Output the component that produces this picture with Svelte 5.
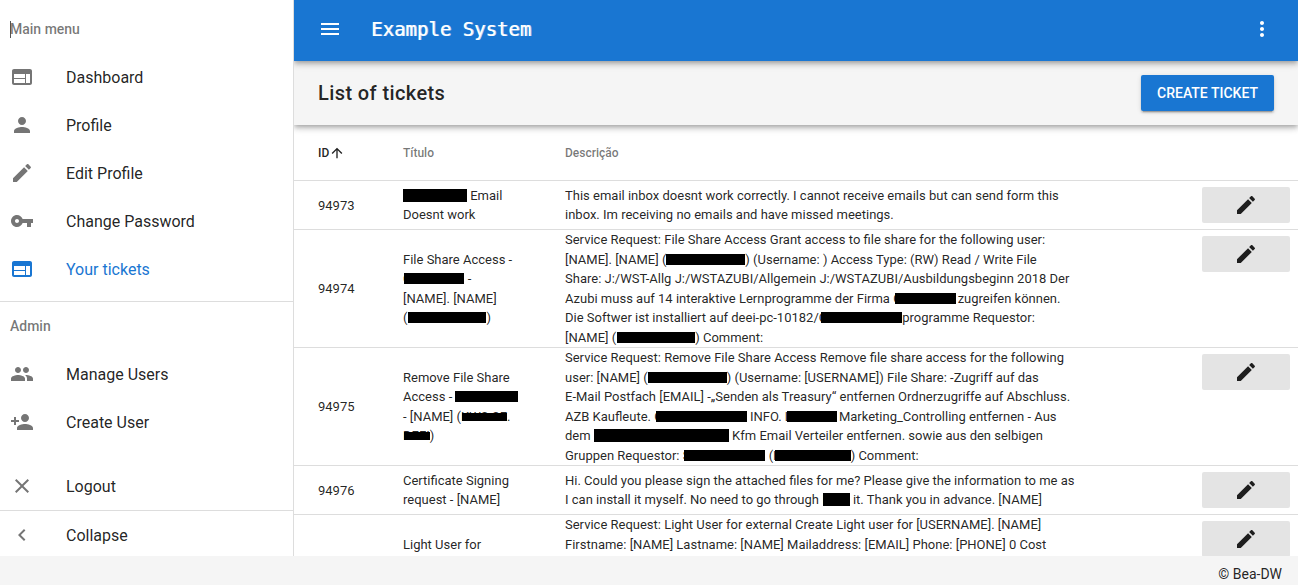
<script>
  const icons = {
    web: 'M20 4H4c-1.100 0-1.990.9-1.990 2L2 18c0 1.100.9 2 2 2h16c1.100 0 2-.9 2-2V6c0-1.100-.9-2-2-2zm-5 14H4v-4h11v4zm0-5H4V9h11v4zm5 5h-4V9h4v9z',
    person: 'M12 12c2.210 0 4-1.790 4-4s-1.790-4-4-4-4 1.790-4 4 1.790 4 4 4zm0 2c-2.670 0-8 1.340-8 4v2h16v-2c0-2.660-5.330-4-8-4z',
    edit: 'M3 17.250V21h3.750L17.810 9.940l-3.750-3.750L3 17.250zM20.710 7.040c.39-.39.39-1.020 0-1.410l-2.340-2.340c-.39-.39-1.020-.39-1.410 0l-1.830 1.830 3.750 3.750 1.830-1.830z',
    key: 'M12.650 10C11.830 7.670 9.610 6 7 6c-3.310 0-6 2.690-6 6s2.690 6 6 6c2.610 0 4.830-1.670 5.650-4H17v4h4v-4h2v-4H12.650zM7 14c-1.100 0-2-.9-2-2s.9-2 2-2 2 .9 2 2-.9 2-2 2z',
    people: 'M16 11c1.660 0 2.990-1.340 2.990-3S17.660 5 16 5c-1.660 0-3 1.340-3 3s1.340 3 3 3zm-8 0c1.660 0 2.990-1.340 2.990-3S9.660 5 8 5C6.340 5 5 6.340 5 8s1.340 3 3 3zm0 2c-2.330 0-7 1.170-7 3.500V19h14v-2.500c0-2.330-4.670-3.500-7-3.500zm8 0c-.29 0-.62.02-.97.05 1.160.84 1.970 1.970 1.970 3.450V19h6v-2.500c0-2.330-4.670-3.500-7-3.500z',
    personAdd: 'M15 12c2.210 0 4-1.790 4-4s-1.790-4-4-4-4 1.790-4 4 1.790 4 4 4zm-9-2V7H4v3H1v2h3v3h2v-3h3v-2H6zm9 4c-2.670 0-8 1.340-8 4v2h16v-2c0-2.660-5.330-4-8-4z',
    close: 'M19 6.410L17.590 5 12 10.590 6.410 5 5 6.410 10.590 12 5 17.590 6.410 19 12 13.410 17.590 19 19 17.590 13.410 12z',
    left: 'M15.410 7.410L14 6l-6 6 6 6 1.410-1.410L10.830 12z',
    menu: 'M3 18h18v-2H3v2zm0-5h18v-2H3v2zm0-7v2h18V6H3z',
    more: 'M12 8c1.100 0 2-.9 2-2s-.9-2-2-2-2 .9-2 2 .9 2 2 2zm0 2c-1.100 0-2 .9-2 2s.9 2 2 2 2-.9 2-2-.9-2-2-2zm0 6c-1.100 0-2 .9-2 2s.9 2 2 2 2-.9 2-2-.9-2-2-2z',
    up: 'M4 12l1.410 1.410L11 7.830V20h2V7.830l5.580 5.590L20 12l-8-8-8 8z'
  };

  const mainMenu = [
    { icon: 'web', label: 'Dashboard' },
    { icon: 'person', label: 'Profile' },
    { icon: 'edit', label: 'Edit Profile' },
    { icon: 'key', label: 'Change Password' },
    { icon: 'web', label: 'Your tickets', active: true }
  ];
  const adminMenu = [
    { icon: 'people', label: 'Manage Users' },
    { icon: 'personAdd', label: 'Create User' }
  ];

  // A redaction bar: width, how far it reaches back over the text, space after it, size variant
  const bar = (w, back = 0, after = 0, size = 'mid') => ({ w, back, after, size });

  const tickets = [
    {
      id: '94973',
      title: [bar(64, 0, 0, 'tall'), ' Email\nDoesnt work'],
      text: ['This email inbox doesnt work correctly. I cannot receive emails but can send form this\ninbox. Im receiving no emails and have missed meetings.']
    },
    {
      id: '94974',
      title: ['File Share Access -\nC', bar(60, 7), ' -\n[NAME]. [NAME]\n(', bar(78, -1), ')'],
      text: [
        'Service Request: File Share Access Grant access to file share for the following user:\n[NAME]. [NAME] (', bar(79),
        ') (Username: ) Access Type: (RW) Read / Write File\nShare: J:/WST-Allg J:/WSTAZUBI/Allgemein J:/WSTAZUBI/Ausbildungsbeginn 2018 Der\nAzubi muss auf 14 interaktive Lernprogramme der Firma C',
        bar(61, 7, 2), 'zugreifen können.\nDie Softwer ist installiert auf deei-pc-10182/C', bar(81, 6),
        'programme Requestor:\n[NAME] (', bar(78, -1), ') Comment:'
      ]
    },
    {
      id: '94975',
      title: ['Remove File Share\nAccess - ', bar(63), '\n- [NAME] (KWS-SE', bar(45, 45, 0, 'thin'), '.\nDEEI', bar(26, 26, 0, 'thin'), ')'],
      text: [
        'Service Request: Remove File Share Access Remove file share access for the following\nuser: [NAME] (', bar(79),
        ') (Username: [USERNAME]) File Share: -Zugriff auf das\nE-Mail Postfach [EMAIL] -„Senden als Treasury“ entfernen Ordnerzugriffe auf Abschluss.\nAZB Kaufleute. C',
        bar(91, 7), ' INFO. L', bar(50, 5, 2), 'Marketing_Controlling entfernen - Aus\ndem ', bar(135, 0, 0, 'tall'),
        ' Kfm Email Verteiler entfernen. sowie aus den selbigen\nGruppen Requestor: S', bar(81, 6), ' (I', bar(76, 2), ') Comment:'
      ]
    },
    {
      id: '94976',
      title: ['Certificate Signing\nrequest - [NAME]'],
      text: [
        'Hi. Could you please sign the attached files for me? Please give the information to me as\nI can install it myself. No need to go through I',
        bar(27, 3, 0, 'tall'), ' it. Thank you in advance. [NAME]'
      ]
    },
    {
      id: '',
      title: ['Light User for\n\n\n\n'],
      text: ['Service Request: Light User for external Create Light user for [USERNAME]. [NAME]\nFirstname: [NAME] Lastname: [NAME] Mailaddress: [EMAIL] Phone: [PHONE] 0 Cost\n\n\n\n\n']
    }
  ];
</script>

{#snippet icon(name, size = 24)}
  <svg viewBox="0 0 24 24" width={size} height={size} aria-hidden="true"><path d={icons[name]} /></svg>
{/snippet}

{#snippet rich(parts)}{#each parts as part}{#if typeof part === 'string'}{part}{:else}<span class="bar {part.size}" style="width:{part.w}px;margin-left:{-part.back}px;margin-right:{part.after}px"></span>{/if}{/each}{/snippet}

{#snippet entry(item)}
  <li><a href="#top" class="item" class:active={item.active}>{@render icon(item.icon)}<span>{item.label}</span></a></li>
{/snippet}

<div class="app">
  <div class="body">
    <nav class="side">
      <h2 class="sub first">Main menu</h2>
      <ul>{#each mainMenu as item}{@render entry(item)}{/each}</ul>
      <hr />
      <h2 class="sub">Admin</h2>
      <ul>{#each adminMenu as item}{@render entry(item)}{/each}</ul>
      <div class="bottom">
        <button class="item">{@render icon('close')}<span>Logout</span></button>
        <hr class="tight" />
        <button class="item">{@render icon('left')}<span>Collapse</span></button>
      </div>
    </nav>

    <div class="content">
      <header class="top">
        <button class="plain" aria-label="Menu">{@render icon('menu')}</button>
        <h1>Example System</h1>
        <button class="plain" aria-label="More">{@render icon('more')}</button>
      </header>
      <div class="heading">
        <h2>List of tickets</h2>
        <button class="create">CREATE TICKET</button>
      </div>
      <main>
        <table>
          <colgroup><col class="c-id" /><col class="c-title" /><col /><col class="c-action" /></colgroup>
          <thead>
            <tr>
              <th class="sorted"><span>ID{@render icon('up', 16)}</span></th>
              <th>Título</th>
              <th>Descrição</th>
              <th></th>
            </tr>
          </thead>
          <tbody>
            {#each tickets as t}
              <tr>
                <td class="id">{t.id}</td>
                <td class="lines">{@render rich(t.title)}</td>
                <td class="lines">{@render rich(t.text)}</td>
                <td class="action"><button class="edit" aria-label="Edit">{@render icon('edit')}</button></td>
              </tr>
            {/each}
          </tbody>
        </table>
      </main>
    </div>
  </div>
  <footer>© Bea-DW</footer>
</div>

<style>
  :global(body) { margin: 0; }
  .app {
    height: 100vh;
    display: flex;
    flex-direction: column;
    overflow: hidden;
    background: #fff;
    color: rgba(0, 0, 0, 0.87);
    font-family: Roboto, sans-serif;
    font-size: 14px;
    line-height: 1.5;
  }
  .app * { box-sizing: border-box; }
  h1, h2, ul { margin: 0; padding: 0; list-style: none; }
  button { font: inherit; color: inherit; border: 0; padding: 0; background: none; cursor: pointer; }
  svg { display: block; flex: none; fill: currentColor; }
  .body { flex: 1; min-height: 0; display: flex; }

  .side {
    width: 294px;
    flex: none;
    display: flex;
    flex-direction: column;
    padding-top: 5px;
    border-right: 1px solid #ddd;
    position: relative;
    z-index: 3;
    background: #fff;
  }
  .sub {
    height: 48px;
    display: flex;
    align-items: center;
    padding-left: 10px;
    font-size: 14px;
    font-weight: 500;
    color: rgba(0, 0, 0, 0.54);
  }
  .first::before {
    content: '';
    width: 1px;
    height: 17px;
    margin-right: -1px;
    background: #555;
  }
  .item {
    width: 100%;
    height: 48px;
    display: flex;
    align-items: center;
    gap: 32px;
    padding-left: 10px;
    font-size: 16px;
    text-align: left;
    text-decoration: none;
    color: rgba(0, 0, 0, 0.87);
  }
  .item span { padding-top: 2px; }
  .item svg { color: rgba(0, 0, 0, 0.54); }
  .item.active, .item.active svg { color: #1976d2; }
  hr { width: 100%; margin: 8px 0 0; border: 0; border-top: 1px solid #ddd; }
  hr.tight { margin: 0; }
  .bottom { margin-top: auto; }
  .bottom .item:last-child { height: 45px; padding-top: 2px; }

  .content { flex: 1; min-width: 0; display: flex; flex-direction: column; }
  .top, .heading {
    position: relative;
    flex: none;
    display: flex;
    align-items: center;
    padding: 0 24px;
    box-shadow: 0 2px 4px -1px rgba(0, 0, 0, 0.2), 0 4px 5px rgba(0, 0, 0, 0.14), 0 1px 10px rgba(0, 0, 0, 0.12);
  }
  .top { z-index: 2; height: 61px; gap: 29px; padding-bottom: 3px; background: #1976d2; color: #fff; }
  .top h1 {
    flex: 1;
    font: 400 19px/28px 'DejaVu Sans Mono', monospace;
    text-shadow: 1px 0 rgba(255, 255, 255, 0.7);
  }
  .heading { z-index: 1; height: 64px; justify-content: space-between; background: #f5f5f5; }
  .heading h2 { font-size: 20px; font-weight: 500; letter-spacing: 0.02em; }
  .create {
    height: 36px;
    padding: 0 16px;
    border-radius: 2px;
    background: #1976d2;
    color: #fff;
    font-weight: 500;
    box-shadow: 0 3px 1px -2px rgba(0, 0, 0, 0.2), 0 2px 2px rgba(0, 0, 0, 0.14), 0 1px 5px rgba(0, 0, 0, 0.12);
  }

  main { flex: 1; min-height: 0; overflow: hidden; }
  table { width: 100%; table-layout: fixed; border-collapse: separate; border-spacing: 0; font-size: 13px; }
  .c-id { width: 85px; }
  .c-title { width: 162px; }
  .c-action { width: 112px; }
  th { height: 56px; padding: 0 0 0 24px; border-bottom: 1px solid #ddd; text-align: left; font-size: 12px; font-weight: 500; color: rgba(0, 0, 0, 0.54); }
  th.sorted { color: rgba(0, 0, 0, 0.87); }
  th span { display: flex; align-items: center; }
  td { height: 49px; padding: 0 0 0 24px; border-bottom: 1px solid #ddd; }
  td.id { padding-top: 1px; }
  .lines { white-space: pre-line; }
  td.action { padding: 6px 8px 6px 0; vertical-align: top; }
  .edit { width: 88px; height: 36px; display: flex; align-items: center; justify-content: center; margin-left: auto; border-radius: 2px; background: #e4e4e4; }
  .bar { display: inline-block; height: 11px; vertical-align: -1px; background: #000; }
  .bar.tall { height: 13px; vertical-align: -2px; }
  .bar.thin { height: 8px; vertical-align: 0; }

  footer { flex: none; height: 29px; padding: 8px 16px 0; background: #f5f5f5; text-align: right; }
</style>
